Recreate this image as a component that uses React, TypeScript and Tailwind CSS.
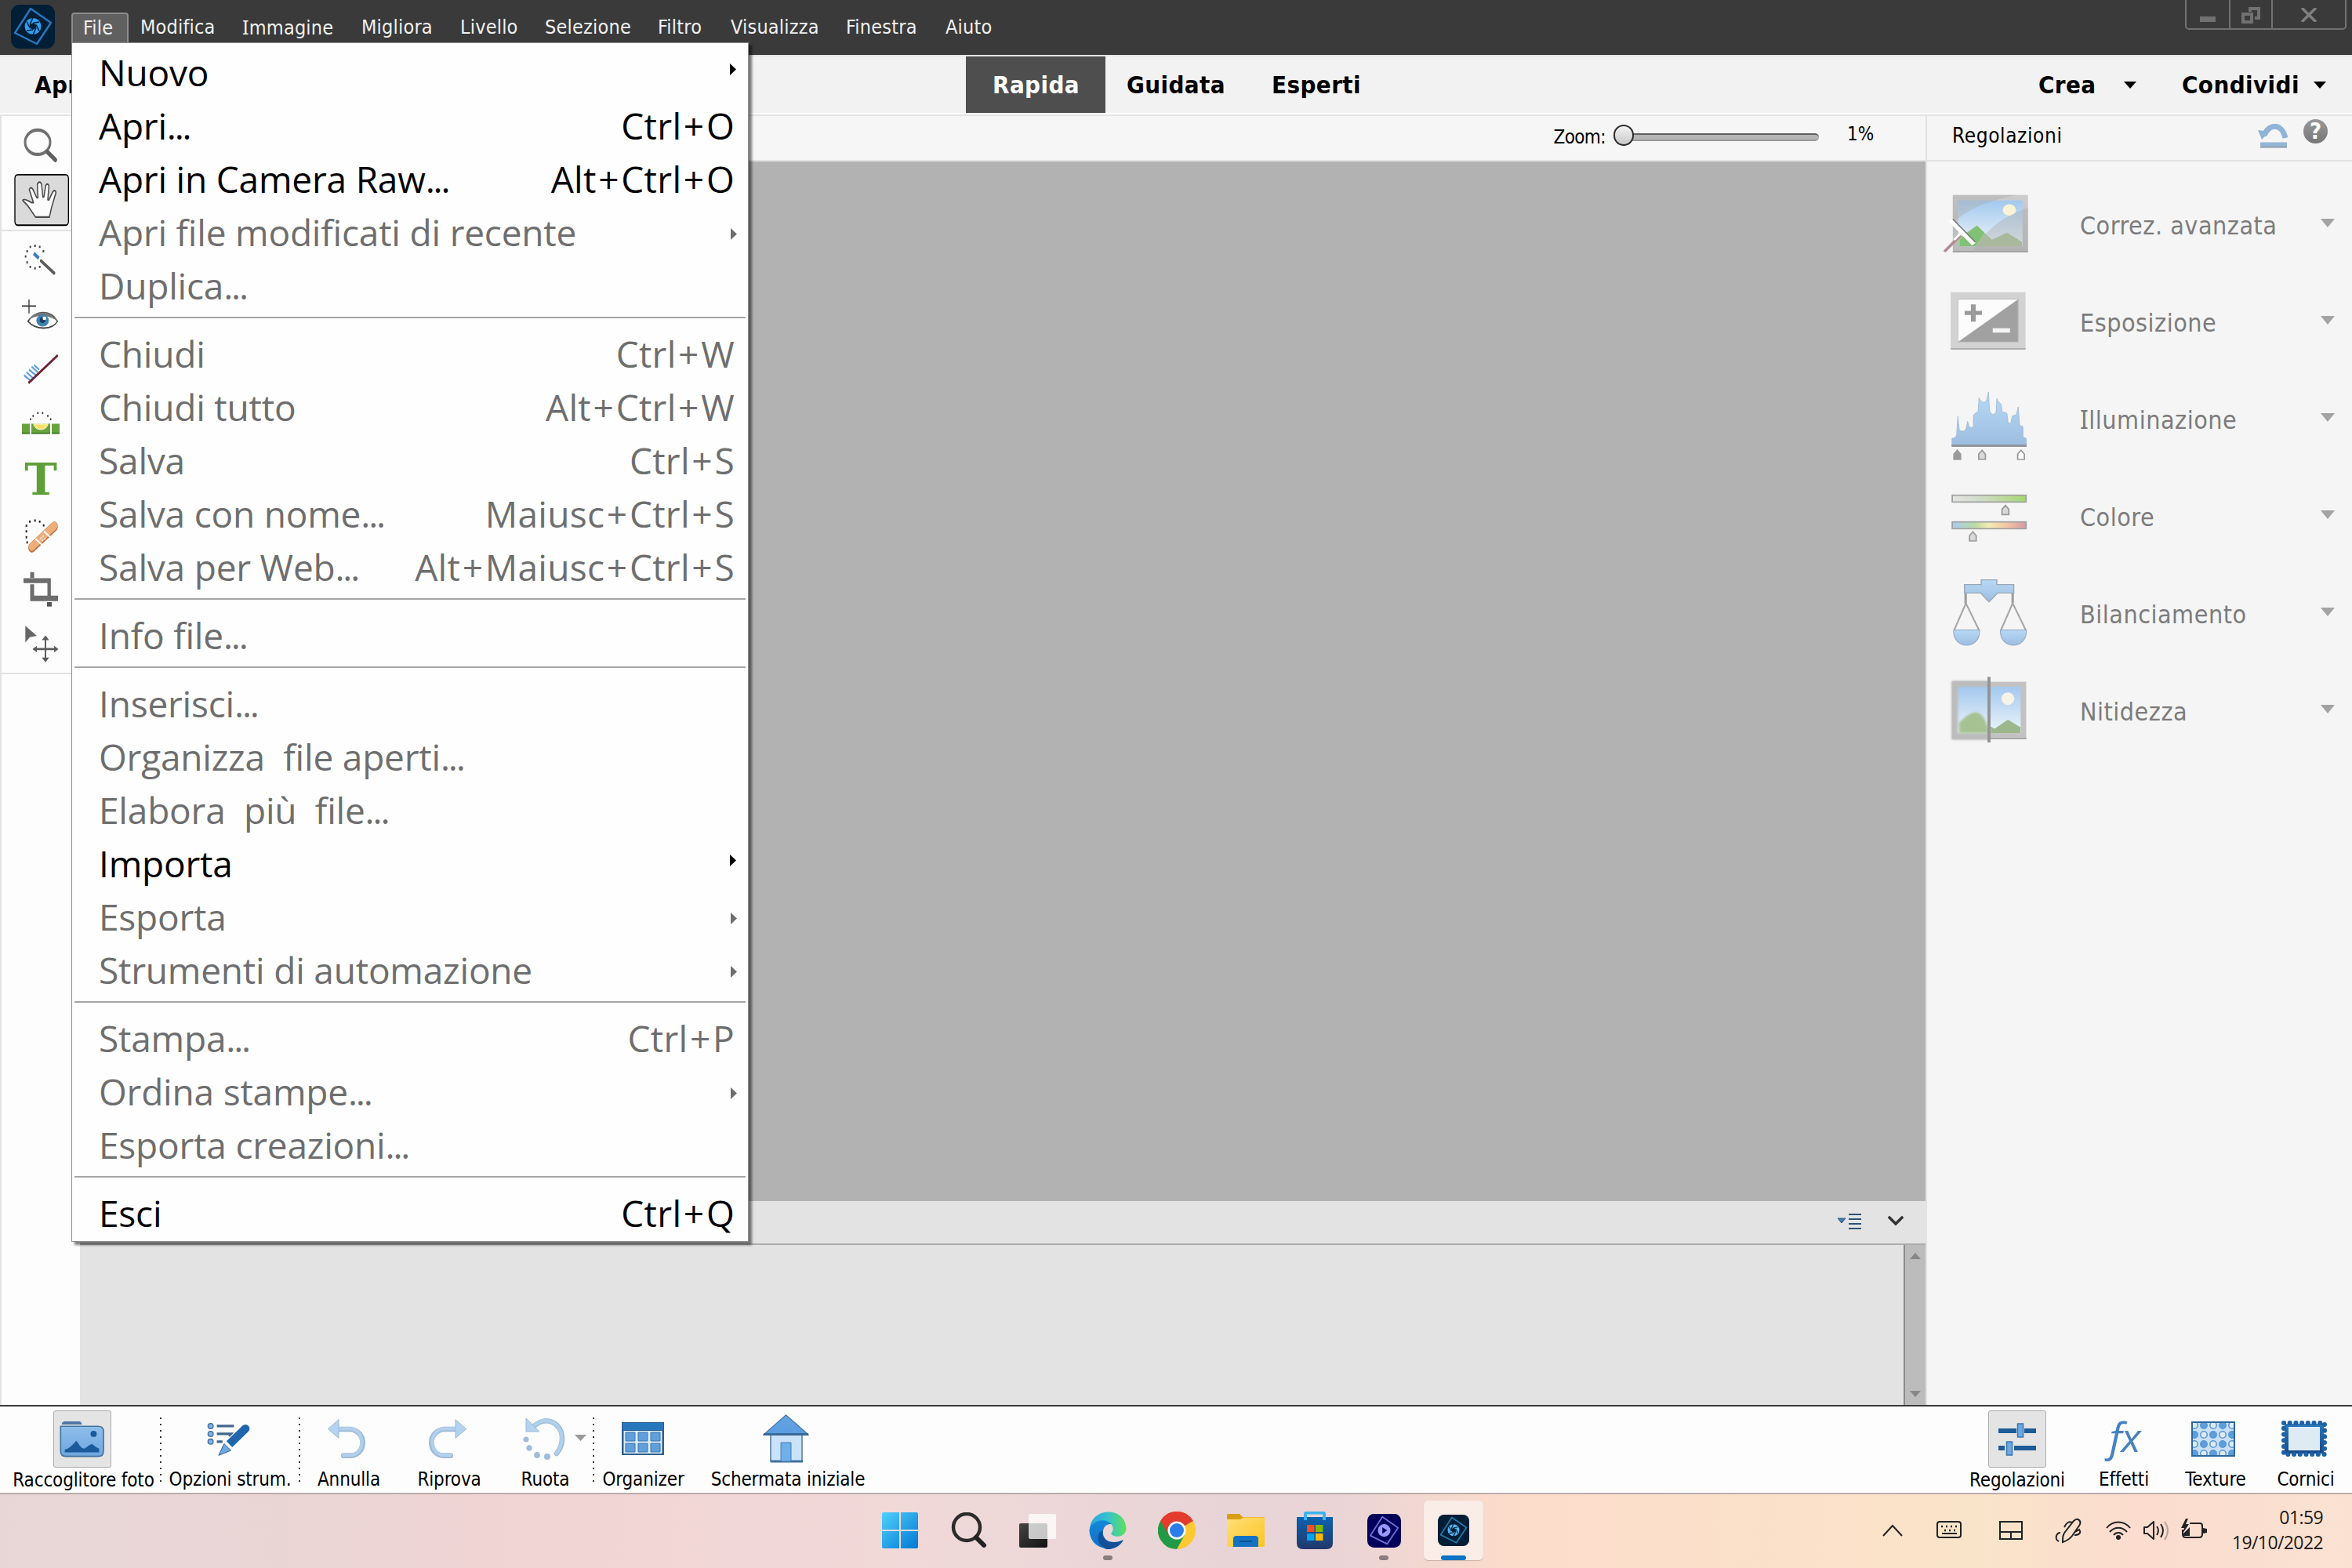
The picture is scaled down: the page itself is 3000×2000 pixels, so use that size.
import type { ReactNode } from 'react'

type MenuEntry = {
  label: string
  keys?: string
  sub?: boolean
  on?: boolean
}

const fileMenu: MenuEntry[][] = [
  [
    { label: 'Nuovo', sub: true, on: true },
    { label: 'Apri...', keys: 'Ctrl+O', on: true },
    { label: 'Apri in Camera Raw...', keys: 'Alt+Ctrl+O', on: true },
    { label: 'Apri file modificati di recente', sub: true },
    { label: 'Duplica...' },
  ],
  [
    { label: 'Chiudi', keys: 'Ctrl+W' },
    { label: 'Chiudi tutto', keys: 'Alt+Ctrl+W' },
    { label: 'Salva', keys: 'Ctrl+S' },
    { label: 'Salva con nome...', keys: 'Maiusc+Ctrl+S' },
    { label: 'Salva per Web...', keys: 'Alt+Maiusc+Ctrl+S' },
  ],
  [{ label: 'Info file...' }],
  [
    { label: 'Inserisci...' },
    { label: 'Organizza  file aperti...' },
    { label: 'Elabora  più  file...' },
    { label: 'Importa', sub: true, on: true },
    { label: 'Esporta', sub: true },
    { label: 'Strumenti di automazione', sub: true },
  ],
  [
    { label: 'Stampa...', keys: 'Ctrl+P' },
    { label: 'Ordina stampe...', sub: true },
    { label: 'Esporta creazioni...' },
  ],
  [{ label: 'Esci', keys: 'Ctrl+Q', on: true }],
]

const menuBar: { label: ReactNode; width: string }[] = [
  { label: 'Modifica', width: 'w-[130px]' },
  { label: <><SerifI />mmagine</>, width: 'w-[152px]' },
  { label: 'Migliora', width: 'w-[126px]' },
  { label: 'Livello', width: 'w-[108px]' },
  { label: 'Selezione', width: 'w-[144px]' },
  { label: 'Filtro', width: 'w-[93px]' },
  { label: 'Visualizza', width: 'w-[147px]' },
  { label: 'Finestra', width: 'w-[127px]' },
  { label: 'Aiuto', width: 'w-[80px]' },
]

function SerifI() {
  return <span className="font-['Noto_Sans']">I</span>
}

function Gradients() {
  return (
    <svg className="absolute" width="0" height="0">
      <defs>
        <linearGradient id="blue" x1="0" y1="0" x2="0" y2="1">
          <stop offset="0" stopColor="#8fbeea" />
          <stop offset="1" stopColor="#6ea6e0" />
        </linearGradient>
        <linearGradient id="deep" x1="0" y1="0" x2="0" y2="1">
          <stop offset="0" stopColor="#2b78bd" />
          <stop offset="1" stopColor="#14498a" />
        </linearGradient>
        <linearGradient id="pale" x1="0" y1="0" x2="0" y2="1">
          <stop offset="0" stopColor="#b7d9f5" />
          <stop offset="1" stopColor="#9dbde0" />
        </linearGradient>
        <linearGradient id="sky" x1="0" y1="0" x2="0" y2="1">
          <stop offset="0" stopColor="#a3c8ee" />
          <stop offset="1" stopColor="#eef5fa" />
        </linearGradient>
        <linearGradient id="frame" x1="0" y1="0" x2="0" y2="1">
          <stop offset="0" stopColor="#cdcdcd" />
          <stop offset="1" stopColor="#b9b9b9" />
        </linearGradient>
        <linearGradient id="sat" x1="0" y1="0" x2="1" y2="0">
          <stop offset="0" stopColor="#e4e4e4" />
          <stop offset=".35" stopColor="#d3dccb" />
          <stop offset="1" stopColor="#a5d873" />
        </linearGradient>
        <linearGradient id="hue" x1="0" y1="0" x2="1" y2="0">
          <stop offset="0" stopColor="#a9cdf3" />
          <stop offset=".3" stopColor="#b9d9a6" />
          <stop offset=".5" stopColor="#f4ebb4" />
          <stop offset=".75" stopColor="#f1c3a4" />
          <stop offset="1" stopColor="#d59ba6" />
        </linearGradient>
        <linearGradient id="win" x1="0" y1="0" x2="1" y2="1">
          <stop offset="0" stopColor="#52d0fb" />
          <stop offset="1" stopColor="#0078d4" />
        </linearGradient>
        <linearGradient id="edge" x1="0" y1="0" x2="1" y2="0">
          <stop offset="0" stopColor="#2aa5dc" />
          <stop offset=".5" stopColor="#35c3cf" />
          <stop offset="1" stopColor="#5fe05a" />
        </linearGradient>
        <linearGradient id="edgeBlue" x1="0" y1="0" x2="0" y2="1">
          <stop offset="0" stopColor="#1588d8" />
          <stop offset="1" stopColor="#0c6fca" />
        </linearGradient>
        <linearGradient id="folder" x1="0" y1="0" x2="1" y2="1">
          <stop offset="0" stopColor="#ffe07a" />
          <stop offset="1" stopColor="#fbc41f" />
        </linearGradient>
        <linearGradient id="store" x1="0" y1="0" x2="0" y2="1">
          <stop offset="0" stopColor="#0b62b0" />
          <stop offset="1" stopColor="#22386a" />
        </linearGradient>
        <linearGradient id="dark" x1="0" y1="0" x2="1" y2="1">
          <stop offset="0" stopColor="#444" />
          <stop offset="1" stopColor="#111" />
        </linearGradient>
        <filter id="soft"><feGaussianBlur stdDeviation="4" /></filter>
      </defs>
    </svg>
  )
}

type ArtProps = { box: string; w: number; h: number; className?: string; children: ReactNode }

function Art({ box, w, h, className, children }: ArtProps) {
  return (
    <svg width={w} height={h} viewBox={box} preserveAspectRatio="none" fill="none" className={`shrink-0 ${className ?? ''}`}>
      {children}
    </svg>
  )
}

function AppLogo({ size, bg, line, fill, play }: { size: number; bg: string; line: string; fill: string; play?: boolean }) {
  return (
    <Art box="0 0 56 56" w={size} h={size}>
      <rect width="56" height="56" rx="11" fill={bg} />
      <path d="M25 5 51 23 33 50 5 36Z" stroke={line} strokeWidth="2.4" strokeLinejoin="round" />
      <circle cx="28" cy="27.5" r="10.5" fill={fill} />
      {play ? (
        <path d="M25 22v11l8-5.500z" fill={bg} />
      ) : (
        <>
          <path d="M28 23.500l4 2v4l-4 2.500-4-2.500v-4z" fill={bg} />
          <path d="M28 23.500 36 22M32 25.500l4 8M32 29.500l-4 9M28 32l-8 1M24 29.500l-4-8M24 25.500l4-9" stroke={bg} strokeWidth="1.600" />
        </>
      )}
    </Art>
  )
}

function Triangle({ w, h, color }: { w: number; h: number; color: string }) {
  return (
    <Art box="0 0 10 10" w={w} h={h}>
      <path d="M0 0h10L5 10z" fill={color} />
    </Art>
  )
}

function TitleBar() {
  return (
    <div className="flex h-[70px] shrink-0 bg-[#3a3a3a] text-[25px] tracking-[0.2px] text-[#f0f0f0]">
      <div className="pt-[6px] pl-[14px]">
        <AppLogo size={56} bg="#001e36" line="#2878bd" fill="#31a0f5" />
      </div>
      <div className="mt-[16px] ml-[21px] flex h-[38px] w-[73px] items-center rounded-t-[4px] border-2 border-b-0 border-[#8c8c8c] bg-[#606060] pl-[13px]">
        File
      </div>
      <div className="mt-[16px] ml-[15px] flex h-[38px] items-center">
        {menuBar.map((item, i) => (
          <span key={i} className={`shrink-0 ${item.width}`}>{item.label}</span>
        ))}
      </div>
      <div className="mr-[7px] ml-auto flex h-[38px] w-[206px] divide-x-2 divide-[#717171] rounded-b-[5px] border-2 border-t-0 border-[#717171]">
        <div className="flex w-[56px] justify-center pt-[21px]">
          <div className="h-[7px] w-[20px] bg-[#717171]" />
        </div>
        <div className="flex w-[54px] justify-center pt-[9px]">
          <Art box="0 0 24 22" w={24} h={22}>
            <path d="M11 6V2h11v12h-5" stroke="#717171" strokeWidth="4" />
            <path d="M2 9h11v10H2z" stroke="#717171" strokeWidth="4" />
          </Art>
        </div>
        <div className="flex flex-1 justify-center pt-[10px]">
          <Art box="0 0 20 18" w={20} h={18}>
            <path d="M1 0l18 18M19 0 1 18" stroke="#808080" strokeWidth="3.500" />
          </Art>
        </div>
      </div>
    </div>
  )
}

function ModeBar() {
  return (
    <div className="flex h-[78px] shrink-0 items-start border-t-2 border-b-2 border-[#e3e3e3] bg-[#f2f2f2] text-[31px] leading-[72px] font-bold tracking-[0.4px] text-black shadow-[inset_0_-2px_0_#fff]">
      <span className="w-[1188px] pl-[44px]">Apri</span>
      <span className="ml-[44px] h-[72px] w-[178px] bg-[#4e4e4e] pl-[34px] text-white">Rapida</span>
      <span className="ml-[27px] w-[185px]">Guidata</span>
      <span className="w-[200px]">Esperti</span>
      <div className="mr-[33px] ml-auto flex items-center">
        <span className="w-[109px]">Crea</span>
        <Triangle w={16} h={9} color="#000" />
        <span className="ml-[58px] w-[168px]">Condividi</span>
        <Triangle w={16} h={9} color="#000" />
      </div>
    </div>
  )
}

const dashes = 'M98 418v.1M104 404v.1M116 392v.1M134 389v.1M152 392v.1M166 404v.1M104 434v.1M116 446v.1M134 450v.1M152 446v.1'

function ToolColumn() {
  return (
    <div className="flex w-[102px] shrink-0 flex-col border-l-2 border-[#e2e2e2] bg-[#fdfdfd]">
      <Art box="6 38 267 153" w={89} h={72}>
        <ellipse cx="144" cy="109" rx="48" ry="33" stroke="#707070" strokeWidth="9" />
        <path d="M182 136 212 157" stroke="#606060" strokeWidth="13" strokeLinecap="round" />
      </Art>
      <Art box="6 191 267 154" w={89} h={73}>
        <rect x="57" y="197" width="205" height="136" rx="10" fill="#dadada" stroke="#000" strokeWidth="4" />
        <path
          d="M136 311 107 281 87 266c3-6 17-1 33 6l8 0-16-35c5-9 13-4 16 3l13 19 4 0-2-36c3-8 13-8 16 0l5 34h4l7-31c5-7 13-3 12 4l-4 34 4 1 15-22c6-6 14-2 11 5l-15 35-9 28z"
          fill="#fbfbfb" stroke="#4c4c4c" strokeWidth="4.500" strokeLinejoin="round"
        />
      </Art>
      <div className="h-[2px] bg-[#e2e2e2]" />
      <Art box="6 350 267 163" w={89} h={77}>
        <path d={dashes} stroke="#444" strokeWidth="6" strokeLinecap="square" />
        <path d="M129 410l20 13" stroke="#3d7ebf" strokeWidth="10" />
        <path d="M149 423l8 6" stroke="#fff" strokeWidth="8" />
        <path d="M157 430l50 33" stroke="#5c5c5c" strokeWidth="9" strokeLinecap="round" />
      </Art>
      <Art box="6 513 267 144" w={89} h={68}>
        <path d="M84 552h54M111 534v38" stroke="#333" strokeWidth="4" />
        <path d="M107 593c30-30 85-33 113 0-20 25-85 24-113 0z" fill="#fff" stroke="#444" strokeWidth="4" />
        <path d="M107 590c30-28 88-28 113 3-25-15-75-22-113-3z" fill="#777" />
        <ellipse cx="163" cy="591" rx="24" ry="16" fill="#3f82b2" />
        <ellipse cx="163" cy="590" rx="11" ry="8" fill="#173f63" />
        <ellipse cx="170" cy="585" rx="7" ry="5" fill="#fff" />
      </Art>
      <Art box="6 657 267 138" w={89} h={65}>
        <path d="M92 739l24 14M101 731l26 16M111 724l26 15M121 716l24 15M130 711l20 13" stroke="#5a9be0" strokeWidth="5" />
        <path d="M109 760 221 685" stroke="#6d2335" strokeWidth="7" />
      </Art>
      <Art box="6 795 267 142" w={89} h={67}>
        <path d="M117 858v.1M127 849v.1M145 841v.1M163 841v.1M183 849v.1M194 858v.1" stroke="#333" strokeWidth="5" strokeLinecap="square" />
        <path d="M84 870h30v27H84zM120 870h72v27h-72zM198 870h30v27h-30z" fill="#67a33b" />
        <path d="M84 894h30v4H84zM120 894h72v4h-72zM198 894h30v4h-30z" fill="#3f7a24" />
        <path d="M129 871h54c-3 20-51 20-54 0z" fill="#ffe26b" stroke="#fff" strokeWidth="2" />
      </Art>
      <div className="flex h-[74px] w-[89px] items-center justify-center pt-[3px] pl-[11px] font-['DejaVu_Serif'] text-[56px] leading-none font-bold text-[#5f9f38]">
        T
      </div>
      <Art box="6 1093 267 146" w={89} h={69}>
        <path d="M104 1190v.1M101 1176v.1M101 1160v.1M101 1145v.1M114 1134v.1M134 1131v.1M152 1134v.1M167 1144v.1" stroke="#222" strokeWidth="6" strokeLinecap="square" />
        <path d="M122 1204 208 1147" stroke="#b5713f" strokeWidth="27" strokeLinecap="round" />
        <path d="M122 1202 208 1145" stroke="#eeae79" strokeWidth="22" strokeLinecap="round" />
        <path d="M136 1180l28 19M168 1160l28 18" stroke="#fff" strokeWidth="5" />
        <path d="M157 1178v.1M165 1173v.1M172 1180v.1M163 1184v.1" stroke="#fff" strokeWidth="5" strokeLinecap="round" />
      </Art>
      <Art box="6 1240 267 150" w={89} h={71}>
        <path d="M90 1294h98v46" stroke="#6d6d6d" strokeWidth="13" />
        <path d="M123 1271v16M123 1304v38h99" stroke="#6d6d6d" strokeWidth="15" />
        <path d="M180 1358h18" stroke="#555" strokeWidth="12" />
      </Art>
      <Art box="6 1390 267 153" w={89} h={72}>
        <path d="M97 1416 141 1443 114 1447 97 1461z" fill="#666" />
        <path d="M174 1450v58M132 1479h84" stroke="#5c5c5c" strokeWidth="6" />
        <path d="M174 1442l14 13h-28zM174 1515l14-13h-28zM124 1479l17-9v18zM224 1479l-17-9v18z" fill="#5c5c5c" />
      </Art>
      <div className="h-[2px] w-[100px] bg-[#e2e2e2]" />
    </div>
  )
}

function Workspace() {
  return (
    <div className="flex flex-1 flex-col">
      <div className="flex h-[58px] shrink-0 items-start border-b-2 border-[#e2e2e2] bg-[#f6f6f6] text-[24px] text-black">
        <span className="ml-auto pt-[8px] leading-[38px] tracking-[-0.6px]">Zoom:</span>
        <div className="relative mt-[22px] ml-[22px] h-[10px] w-[250px] rounded-[5px] border-t-2 border-b-2 border-t-[#5f5f5f] border-b-[#999] bg-[#b5b5b5]">
          <div className="absolute -top-[13px] -left-[12px] h-[27px] w-[26px] rounded-full border-[2px] border-[#2d2d2d] bg-linear-to-b from-[#f2f2f2] to-[#c9c9c9]" />
        </div>
        <span className="ml-[36px] w-[100px] pt-[4px] leading-[38px]">1%</span>
      </div>
      <div className="flex-1 bg-[#b2b2b2]" />
      <div className="flex h-[56px] shrink-0 items-center border-b-2 border-[#acacac] bg-[#e3e3e3]">
        <Art box="0 0 30 20" w={30} h={20} className="-mt-[3px] ml-auto">
          <path d="M0 6h10L5 12z" fill="#3f7bb5" stroke="#2b5580" strokeWidth="1" />
          <path d="M14 1h16M14 7h16M14 13h16M14 19h16" stroke="#2d5379" strokeWidth="2" />
        </Art>
        <Art box="0 0 20 13" w={20} h={13} className="-mt-[3px] mr-[28px] ml-[34px]">
          <path d="M2 2l8 8 8-8" stroke="#333" strokeWidth="3.600" strokeLinecap="round" />
        </Art>
      </div>
      <div className="flex h-[204px] shrink-0 bg-[#e3e3e3]">
        <div className="ml-auto flex w-[28px] flex-col items-center justify-between border-l-2 border-[#8b8b8b] bg-[#bcbcbc] pt-[10px] pb-[10px]">
          <Art box="0 0 14 8" w={14} h={8}><path d="M0 8h14L7 0z" fill="#878787" /></Art>
          <Triangle w={14} h={8} color="#878787" />
        </div>
      </div>
    </div>
  )
}

const handle = (x: number, y: number, fill: string) => (
  <path d={`M${x - 12} ${y + 37}v-20l12-15 12 15v20z`} fill={fill} stroke="#9a9a9a" strokeWidth="5" />
)

const adjustments: { label: ReactNode; icon: ReactNode }[] = [
  {
    label: 'Correz. avanzata',
    icon: (
      <Art box="200 740 292 232" w={112} h={77} className="-ml-[11px]">
        <rect x="236" y="745" width="250" height="220" fill="url(#frame)" />
        <path d="M236 963h250" stroke="#999" strokeWidth="5" />
        <rect x="254" y="766" width="214" height="176" fill="url(#sky)" />
        <circle cx="424" cy="803" r="22" fill="#fbf3d5" />
        <path d="M254 942v-30l62-50 50 55 50-27 50 35v17z" fill="#a8c495" />
        <path d="M260 942v-25l56-54 25 28-30 51z" fill="#7fc175" />
        <path d="M236 745h215c-90 20-165 50-215 110zM486 795c-80 30-140 80-185 170h185z" fill="#aaa" opacity=".4" />
        <path d="M208 963 262 900" stroke="#b08a92" strokeWidth="10" />
        <path d="M240 918 264 890" stroke="#fff" strokeWidth="8" />
        <path d="M228 842 306 934" stroke="#fff" strokeWidth="15" />
        <path d="M236 838 311 926" stroke="#777" strokeWidth="4" />
      </Art>
    ),
  },
  {
    label: 'Esposizione',
    icon: (
      <Art box="230 1115 252 226" w={96} h={75}>
        <rect x="230" y="1117" width="251" height="220" fill="#d2d2d2" />
        <path d="M230 1335h251" stroke="#a0a0a0" strokeWidth="5" />
        <rect x="254" y="1142" width="204" height="168" fill="#bbb" />
        <path d="M256 1145h199L256 1307z" fill="#fcfcfc" />
        <path d="M455 1147v160H258z" fill="#a1a1a1" />
        <path d="M277 1197h58M306 1164v66" stroke="#9b9b9b" strokeWidth="16" />
        <path d="M371 1264h58" stroke="#f4f4f4" strokeWidth="17" />
      </Art>
    ),
  },
  {
    label: <><SerifI />lluminazione</>,
    icon: (
      <Art box="136 56 276 272" w={98} h={91} className="mt-[19px]">
        <path
          d="M141 272v-30c14-2 17-10 17-20l4-65 5 50c5 10 18 10 24 0l6-30 6 20c3 5 14 4 15-2v-40c3-10 14-10 17-18l3-50c8 20 22 22 27 10l7-32 4 70c5 20 22 20 24 0l2-45c4 20 16 12 17 30l1 20c6 4 18 0 19 10l3 28c4 10 9 8 12-2l3-18c5-8 12 0 16-10l6-26 5 70c5 4 12 0 12 8v36l12 6v30z"
          fill="url(#pale)" stroke="#93b2d0" strokeWidth="2"
        />
        <path d="M140 270h269" stroke="#8f949c" strokeWidth="9" />
        {handle(160, 285, '#9a9a9a')}
        {handle(249, 285, '#d9d9d9')}
        {handle(389, 285, '#fff')}
      </Art>
    ),
  },
  {
    label: 'Colore',
    icon: (
      <Art box="136 456 276 192" w={98} h={64} className="mt-[7px]">
        <rect x="142" y="464" width="265" height="26" fill="url(#sat)" stroke="#a0a0a0" strokeWidth="5" />
        <rect x="142" y="566" width="265" height="26" fill="url(#hue)" stroke="#a0a0a0" strokeWidth="5" />
        {handle(333, 501, '#d9d9d9')}
        {handle(216, 602, '#d9d9d9')}
      </Art>
    ),
  },
  {
    label: 'Bilanciamento',
    icon: (
      <Art box="136 776 276 260" w={98} h={87}>
        <path d="M190 830v40M359 830v40" stroke="#9f9f9f" strokeWidth="9" />
        <path d="M186 799h60v-18h56v18h61v32h-58l-31 34-30-34h-58z" fill="url(#pale)" stroke="#9aa7b5" strokeWidth="4" />
        <path d="M149 972l42-102 47 102M317 972l42-102 47 102" stroke="#a5a5a5" strokeWidth="6" />
        <path d="M147 972h93c4 77-97 77-93 0zM315 972h93c4 77-97 77-93 0z" fill="url(#pale)" stroke="#8fa8c6" strokeWidth="3" />
      </Art>
    ),
  },
  {
    label: 'Nitidezza',
    icon: (
      <Art box="130 1148 288 262" w={102} h={87} className="-ml-[2px]">
        <rect x="140" y="1168" width="136" height="225" fill="#aaa" filter="url(#soft)" />
        <rect x="143" y="1171" width="133" height="219" fill="#bcbcbc" />
        <rect x="276" y="1171" width="132" height="219" fill="#c2c2c2" />
        <path d="M276 1389h133" stroke="#999" strokeWidth="5" />
        <rect x="162" y="1190" width="112" height="178" fill="url(#sky)" filter="url(#soft)" />
        <rect x="276" y="1190" width="112" height="178" fill="url(#sky)" />
        <path d="M166 1368v-40c20-20 40-40 60-40s40 30 48 80z" fill="#a7c292" filter="url(#soft)" />
        <path d="M280 1368v-25l14 8 48-34 45 28v23z" fill="#9cb78b" />
        <ellipse cx="342" cy="1236" rx="23" ry="24" fill="#f7f3e6" />
        <path d="M274 1152v252" stroke="#939393" strokeWidth="11" />
      </Art>
    ),
  },
]

function AdjustmentsPanel() {
  return (
    <div className="flex w-[544px] shrink-0 flex-col border-l-2 border-[#e2e2e2] bg-[#f5f5f5]">
      <div className="flex h-[58px] shrink-0 items-start border-b-2 border-[#e2e2e2] pl-[32px]">
        <span className="pt-[6px] text-[26px] leading-[38px] tracking-[0.6px] text-black">Regolazioni</span>
        <Art box="0 0 38 34" w={38} h={34} className="mt-[7px] ml-auto">
          <path d="M8 18C12 4 30 0 35 21" stroke="#8fb4d8" strokeWidth="7" />
          <path d="M0 11l15 2L5 23z" fill="#8fb4d8" />
          <path d="M3 29h34" stroke="#94b6d6" strokeWidth="5" />
          <path d="M3 32.500h34" stroke="#7f93a6" strokeWidth="2" />
        </Art>
        <div className="mt-[4px] mr-[31px] ml-[20px] flex size-[31px] items-center justify-center rounded-full bg-linear-to-b from-[#999] to-[#777] text-[29px] leading-none font-bold text-white">
          ?
        </div>
      </div>
      <div className="flex flex-col pt-[17px]">
        {adjustments.map((item, i) => (
          <div key={i} className="flex h-[124px] items-center pl-[30px]">
            <div className="flex w-[165px] items-center">{item.icon}</div>
            <span className="pt-[5px] text-[32px] tracking-[0.5px] text-[#7c7c7c]">{item.label}</span>
            <div className="mr-[22px] mb-[1px] ml-auto">
              <Triangle w={18} h={11} color="#a3a3a3" />
            </div>
          </div>
        ))}
      </div>
    </div>
  )
}

function Action({ label, width, children }: { label: string; width: string; children: ReactNode }) {
  return (
    <div className={`flex shrink-0 flex-col items-center ${width}`}>
      <div className="mt-[5px] flex h-[73px] items-center">{children}</div>
      <span className="text-[24px] leading-[33px] tracking-[-0.15px] whitespace-nowrap">{label}</span>
    </div>
  )
}

function Dots() {
  return (
    <Art box="0 0 2 84" w={2} h={84} className="mt-[14px]">
      <path d="M1 0v84" stroke="#333" strokeWidth="2" strokeDasharray="2 6" />
    </Art>
  )
}

const undoShape = (
  <>
    <path d="M1290 789h50c65 8 60 100 0 101h-26" stroke="#9db9d4" strokeWidth="20" strokeLinecap="round" />
    <path d="M1290 787h50c61 8 56 100 0 101h-26" stroke="#b0d0ec" strokeWidth="13" strokeLinecap="round" />
    <path d="M1254 788l41-36v71z" fill="#b3d3f0" stroke="#9db9d4" strokeWidth="3" />
  </>
)

const selectedBox = 'flex h-[73px] w-[74px] items-center justify-center rounded-[3px] border border-[#adadad] bg-[#e4e4e4]'

function ActionBar() {
  return (
    <div className="flex h-[114px] shrink-0 border-t-2 border-b-2 border-t-[#3a3a3a] border-b-[#bdadad] bg-[#fdfdfd] text-black">
      <div className="w-[9px]" />
      <Action label="Raccoglitore foto" width="w-[195px]">
        <div className={`${selectedBox} mr-[4px]`}>
          <Art box="226 753 172 142" w={57} h={47}>
            <path d="M234 768c2-10 6-12 14-12h52c8 0 10 4 12 12z" fill="#4c78a8" />
            <path d="M230 775h144c14 0 21 8 21 20v76c0 14-6 20-20 20H250c-14 0-20-6-20-20z" fill="url(#blue)" stroke="#44729f" strokeWidth="5" />
            <path d="M246 875v-10c18-4 30-18 44-34 12 12 16 28 30 30 12-4 20-16 32-17 10 8 14 12 26 17v14z" fill="#1d5a9c" />
            <circle cx="357" cy="804" r="12" fill="#1d5a9c" />
          </Art>
        </div>
      </Action>
      <Dots />
      <Action label="Opzioni strum." width="w-[175px]">
        <Art box="790 765 166 130" w={55} h={43} className="-ml-[4px]">
          <path d="M828 780h66M828 810h54l-8 8M828 840h22" stroke="#43688f" strokeWidth="10" />
          <circle cx="804" cy="780" r="10" fill="#7fb2e4" stroke="#3f6b9a" strokeWidth="4" />
          <circle cx="804" cy="810" r="10" fill="#7fb2e4" stroke="#3f6b9a" strokeWidth="4" />
          <circle cx="804" cy="840" r="10" fill="#7fb2e4" stroke="#3f6b9a" strokeWidth="4" />
          <path d="M876 850 938 790" stroke="#1f66ad" strokeWidth="32" />
          <circle cx="938" cy="790" r="16" fill="#1f66ad" />
          <path d="M856 848l26 26-47 19z" fill="#6fa8e0" stroke="#2e6299" strokeWidth="3" />
        </Art>
      </Action>
      <Dots />
      <div className="w-[2px]" />
      <Action label="Annulla" width="w-[120px]">
        <Art box="1250 750 150 153" w={50} h={51} className="-ml-[6px]">{undoShape}</Art>
      </Action>
      <div className="w-[8px]" />
      <Action label="Riprova" width="w-[120px]">
        <Art box="1250 750 150 153" w={50} h={51} className="mr-[5px] -scale-x-100">{undoShape}</Art>
      </Action>
      <div className="w-[2px]" />
      <Action label="Ruota" width="w-[121px]">
        <Art box="0 0 84 54" w={84} h={54} className="ml-[27px]">
          <path d="M12 13C28-4 50 6 50 27c0 9-3 14-7 19" stroke="#9db9d4" strokeWidth="6.500" strokeLinecap="round" />
          <path d="M12 12.500C28-4.500 49.500 6 49.500 27c0 9-3 14-7 19" stroke="#b0d0ec" strokeWidth="4.500" strokeLinecap="round" />
          <path d="M4 1v17h17z" fill="#b3d3f0" stroke="#9db9d4" />
          <circle cx="4" cy="28" r="3.500" fill="#9fbddb" />
          <circle cx="8" cy="39" r="3.700" fill="#9fbddb" />
          <circle cx="18" cy="48" r="3.900" fill="#9fbddb" />
          <circle cx="31" cy="50" r="4" fill="#9fbddb" />
          <path d="M66 22h15l-7.500 8z" fill="#999" />
        </Art>
      </Action>
      <Dots />
      <Action label="Organizer" width="w-[125px]">
        <Art box="0 0 54 42" w={54} h={42} className="-ml-[2px]">
          <rect width="54" height="42" fill="#2c5e8e" />
          <rect x="1" y="1" width="52" height="9" fill="#2777bd" />
          <rect x="2.500" y="11" width="49" height="29" fill="#dcebf9" />
          <path d="M5 13h12v11H5zM21 13h12v11H21zM37 13h12v11H37zM5 27h12v11H5zM21 27h12v11H21zM37 27h12v11H37z" fill="#5f9fdc" stroke="#3c74ab" strokeWidth="1" />
        </Art>
      </Action>
      <div className="w-[19px]" />
      <Action label="Schermata iniziale" width="w-[206px]">
        <Art box="0 0 59 62" w={59} h={62} className="-ml-[6px]">
          <path d="M10 26h40v34H10z" fill="#cbe3fa" stroke="#4d79a4" strokeWidth="1.500" />
          <path d="M10 60h41" stroke="#40709f" strokeWidth="3" />
          <path d="M23 36h13v24H23z" fill="#6fb0ea" stroke="#477cae" />
          <path d="M29.500 1 58 26H1z" fill="url(#blue)" stroke="#4779ac" strokeWidth="1.500" />
          <path d="M29.500 2 56 25H3z" fill="#4e97e0" opacity=".65" />
          <path d="M1 25.500h57" stroke="#3a6899" strokeWidth="3" />
        </Art>
      </Action>
      <div className="ml-auto" />
      <Action label="Regolazioni" width="w-[132px]">
        <div className={selectedBox}>
          <Art box="0 0 50 42" w={50} h={42}>
            <path d="M1 10h23M34 10h15M1 32h8M21 32h28" stroke="#1d5c97" strokeWidth="6" />
            <path d="M25.500 1h7v17h-7zM11.500 24h7v17h-7z" fill="#6ca8e2" stroke="#3c76b0" strokeWidth="1.500" />
          </Art>
        </div>
      </Action>
      <Action label="Effetti" width="w-[140px]">
        <div className="h-[64px] pl-[2px] font-['Open_Sans'] text-[52px] leading-[58px] tracking-[-1px] text-[#4682bf] italic">
          fx
        </div>
      </Action>
      <Action label="Texture" width="w-[94px]">
        <Art box="0 0 56 45" w={56} h={45} className="-ml-[6px]">
          <rect x="1" y="1" width="54" height="43" fill="#c9e0f6" stroke="#2c679f" strokeWidth="2" />
          {[0, 1, 2, 3].map((r) =>
            [0, 1, 2, 3, 4].map((c) => (
              <circle
                key={`${r}-${c}`}
                cx={4 + c * 12}
                cy={5 + r * 12}
                r="4.2"
                fill={(r + c) % 2 ? '#5d9edf' : '#dcebf5'}
                stroke="#5b97d2"
                strokeWidth="1.6"
              />
            )),
          )}
          <rect x="1" y="1" width="54" height="43" stroke="#2c679f" strokeWidth="2" />
        </Art>
      </Action>
      <div className="w-[18px]" />
      <Action label="Cornici" width="w-[100px]">
        <Art box="0 0 58 46" w={58} h={46} className="-ml-[4px]">
          <rect x="4" y="4" width="50" height="38" fill="url(#deep)" />
          <rect x="3" y="3" width="52" height="40" stroke="#1f62a3" strokeWidth="6" strokeDasharray=".1 7.6" strokeLinecap="round" />
          <rect x="9" y="8" width="40" height="30" fill="#deebf5" />
        </Art>
      </Action>
      <div className="w-[9px]" />
    </div>
  )
}

function Pin({ active, dot, children }: { active?: boolean; dot?: boolean; children: ReactNode }) {
  return (
    <div className={`flex h-[76px] w-[76px] shrink-0 flex-col items-center rounded-[6px] ${active ? 'bg-[#faece6] shadow-[0_1px_1px_#00000030]' : ''}`}>
      <div className="flex h-[70px] items-center pt-[6px]">{children}</div>
      {dot && <div className="h-[6px] w-[12px] rounded-full bg-[#8b7c7e]" />}
      {active && <div className="h-[6px] w-[32px] rounded-full bg-[#0a73c4]" />}
    </div>
  )
}

function Taskbar() {
  return (
    <div className="flex h-[94px] shrink-0 items-center bg-[linear-gradient(90deg,#e8d6d7_0%,#ead5d5_12%,#f1d4d4_22%,#f1d9d8_38%,#e8d4d7_52%,#ead4d6_57%,#fbdccb_64%,#fbe2c9_79%,#f9e4c9_84%,#fbdccf_91%,#fae2d2_100%)]">
      <div className="flex h-full flex-1 items-start gap-[12.2px] pt-[8px] pl-[1110px]">
        <Pin>
          <Art box="0 0 46 46" w={46} h={46}>
            <rect width="46" height="46" rx="2" fill="url(#win)" />
            <path d="M23 0v46M0 23h46" stroke="#e9dadb" strokeWidth="2" />
          </Art>
        </Pin>
        <Pin>
          <Art box="0 0 46 46" w={46} h={46}>
            <circle cx="20" cy="19" r="17" stroke="#2b2b2b" strokeWidth="4.500" />
            <path d="M32 32l10 10" stroke="#222" strokeWidth="6" strokeLinecap="round" />
          </Art>
        </Pin>
        <Pin>
          <Art box="0 0 48 45" w={48} h={45}>
            <rect y="13" width="36" height="31" rx="2" fill="url(#dark)" />
            <rect x="12" y="1" width="35" height="32" rx="2" fill="#fff" opacity=".75" />
          </Art>
        </Pin>
        <Pin dot>
          <Art box="0 0 48 48" w={48} h={48}>
            <path d="M1 22C3-6 46-7 47.500 21c0 12-14 13-19 8-1-2 3-3 2-9C27 9 8 9 1 22z" fill="url(#edge)" />
            <path d="M.5 25C0 13 20 6 29 16c-9-1-12 7-11 13 2 9 13 15 24 8-9 15-39 14-41.500-12z" fill="url(#edgeBlue)" />
            <path d="M18 24c-4 13 12 19 26 12-4 9-15 13-22 12-13-5-13-22-4-24z" fill="#12519a" />
          </Art>
        </Pin>
        <Pin>
          <Art box="0 0 48 48" w={48} h={48}>
            <circle cx="24" cy="24" r="24" fill="#fcc934" />
            <path d="M24 24 3.200 12A24 24 0 0 1 44.800 12z" fill="#e33b2e" />
            <path d="M24 24 3.200 12A24 24 0 0 0 24 48l10-18z" fill="#219a47" />
            <path d="M24 12h20.800A24 24 0 0 0 3.200 12L14 30z" fill="#e33b2e" />
            <circle cx="24" cy="24" r="11.500" fill="#fff" />
            <circle cx="24" cy="24" r="9" fill="#2b7de9" />
          </Art>
        </Pin>
        <Pin>
          <Art box="0 0 48 43" w={48} h={43}>
            <path d="M0 2q0-2 2-2h14l4 4h26q2 0 2 2v6H0z" fill="#d99f13" />
            <path d="M0 7h17l4-2.500h25q2 0 2 2V40q0 2-2 2H2q-2 0-2-2z" fill="url(#folder)" />
            <path d="M8 42V32q0-4 4-4h24q4 0 4 4v10z" fill="#1273c2" />
            <path d="M16 35h16" stroke="#0a518f" strokeWidth="2" />
          </Art>
        </Pin>
        <Pin>
          <Art box="0 0 46 48" w={46} h={48}>
            <path d="M11 11V3q0-1.500 2-1.500h20q2 0 2 1.500v8" stroke="#3bb4ee" strokeWidth="4" />
            <path d="M0 7h46v33q0 8-8 8H8q-8 0-8-8z" fill="url(#store)" />
            <path d="M11 11V7M35 11V7" stroke="#3bb4ee" strokeWidth="4" />
            <path d="M13 17h9.500v9H13z" fill="#f25022" />
            <path d="M24 17h9.500v9H24z" fill="#7fba00" />
            <path d="M13 28h9.500v9H13z" fill="#00a4ef" />
            <path d="M24 28h9.500v9H24z" fill="#ffb900" />
          </Art>
        </Pin>
        <Pin dot>
          <AppLogo size={43} bg="#00005b" line="#6f6fd8" fill="#9999ff" play />
        </Pin>
        <Pin active>
          <AppLogo size={40} bg="#001e36" line="#2878a8" fill="#58b4f0" />
        </Pin>
      </div>
      <div className="flex h-full w-[600px] shrink-0 items-start text-[#1d1815]">
        <Art box="0 0 420 94" w={420} h={94}>
          <path d="M2 53l12-13 12 13" stroke="#222" strokeWidth="2" />
          <g stroke="#222" strokeWidth="2">
            <rect x="71" y="35" width="30" height="20" rx="3" />
            <path d="M77 50h19" />
            <path d="M76 41h2M82 41h2M88 41h2M94 41h2M80 46h2M86 46h2M92 46h2" strokeWidth="2.500" />
            <path d="M151 35h28v22h-28zM151 48h28M165 48v9" />
            <path d="M231 61c0-6 0-9 3-13l11-14c5-5 11 0 7 6l-9 13c-3 4-6 6-12 8zM233 42c3-6 6-8 10-6M226 60c-6-3-3-11 2-11M247 48l5-3c3 4 0 7-6 7" />
            <path d="M287 43c8-10 22-10 30 0M291 48c6-7 16-7 22 0M296 52c3-4 9-4 12 0" />
            <path d="M335 42h4l8-7v22l-8-7h-4z" strokeLinejoin="round" />
            <path d="M351 41q4 5 0 11M356 38q6 8 0 17" />
            <path d="M361 35q8 11 0 23" opacity=".3" />
            <path d="M393 37h13q3 0 3 3v11q0 4-4 4h-17q-4 0-4-4v-6" />
          </g>
          <circle cx="302" cy="55" r="3" fill="#222" />
          <path d="M388 31l-6 12h4l-2 7 8-12h-4l3-7zM385 53V50l8-8v11zM410 43l5 1v5l-5 1z" fill="#222" />
        </Art>
        <div className="mr-[37px] ml-auto flex flex-col pt-[13px] text-right font-['Open_Sans'] text-[23px] leading-[32px] tracking-[-0.6px]">
          <span>01:59</span>
          <span>19/10/2022</span>
        </div>
      </div>
    </div>
  )
}

function MenuLabel({ text }: { text: string }) {
  const dotted = text.endsWith('...')
  return (
    <span>
      {dotted ? text.slice(0, -3) : text}
      {dotted && <span className="tracking-[-2.2px]">...</span>}
    </span>
  )
}

function Shortcut({ keys }: { keys: string }) {
  return (
    <span className="mr-[17px] ml-auto tracking-[0.3px]">
      {keys.split('+').map((key, i) => (
        <span key={key}>
          {i > 0 && <span className="px-[2.5px]">+</span>}
          {key}
        </span>
      ))}
    </span>
  )
}

function FileMenu() {
  return (
    <div className="absolute top-[54px] left-[91px] w-[864px] border border-[#8e8e8e] bg-[#fefefe] pt-[5px] font-['Open_Sans'] text-[46px] tracking-[-0.2px] shadow-[4px_4px_3px_#00000080]">
      {fileMenu.map((group, g) => (
        <div key={g}>
          {g > 0 && <div className="mx-[3px] mt-[4px] mb-[13px] h-[2px] bg-[#a5a5a5]" />}
          {group.map((item) => (
            <div
              key={item.label}
              className={`flex h-[68px] items-center pb-[4px] pl-[34px] leading-none whitespace-pre ${item.on ? 'text-black' : 'text-[#6e6e6e]'}`}
            >
              <MenuLabel text={item.label} />
              {item.keys && <Shortcut keys={item.keys} />}
              {item.sub && (
                <Art box="0 0 8 15" w={8} h={15} className={`ml-auto ${item.on ? 'mr-[15px] mb-[8px]' : 'mr-[14px] -mb-[4px]'}`}>
                  <path d="M0 0l8 7.500-8 7.500z" fill="currentColor" />
                </Art>
              )}
            </div>
          ))}
        </div>
      ))}
    </div>
  )
}

export default function App() {
  return (
    <div className="relative flex h-[2000px] w-[3000px] flex-col overflow-hidden bg-[#fdfdfd] font-['DejaVu_Sans_Condensed','DejaVu_Sans',sans-serif]">
      <Gradients />
      <TitleBar />
      <ModeBar />
      <div className="flex flex-1">
        <ToolColumn />
        <Workspace />
        <AdjustmentsPanel />
      </div>
      <ActionBar />
      <Taskbar />
      <FileMenu />
    </div>
  )
}
